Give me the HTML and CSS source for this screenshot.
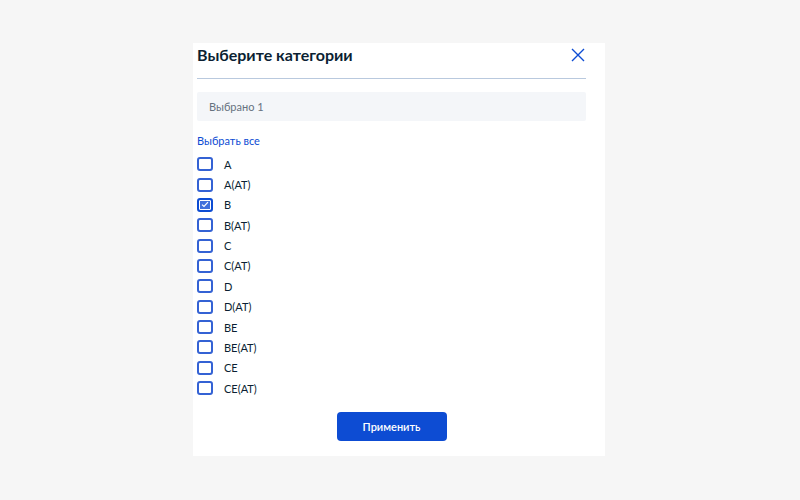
FILE: index.html
```html
<!DOCTYPE html>
<html lang="ru">
<head>
<meta charset="utf-8">
<link rel="stylesheet" href="styles.css">
</head>
<body>
<div class="card">
  <div class="header">
    <h1 class="title">Выберите категории</h1>
    <button class="close" aria-label="Закрыть">
      <svg width="14" height="14" viewBox="0 0 14 14"><path d="M1 1L13 13M13 1L1 13" stroke="#0d4cd3" stroke-width="1.4" fill="none"/></svg>
    </button>
  </div>
  <div class="field">Выбрано 1</div>
  <a class="select-all" href="#">Выбрать все</a>
  <ul class="list">
    <li class="row"><span class="box"></span><span class="label">A</span></li>
    <li class="row"><span class="box"></span><span class="label">A(AT)</span></li>
    <li class="row"><span class="box checked"><svg width="8" height="7" viewBox="0 0 8 7"><path d="M1 3.6L3 5.5L7 1.2" stroke="#fff" stroke-width="1.2" fill="none"/></svg></span><span class="label">B</span></li>
    <li class="row"><span class="box"></span><span class="label">B(AT)</span></li>
    <li class="row"><span class="box"></span><span class="label">C</span></li>
    <li class="row"><span class="box"></span><span class="label">C(AT)</span></li>
    <li class="row"><span class="box"></span><span class="label">D</span></li>
    <li class="row"><span class="box"></span><span class="label">D(AT)</span></li>
    <li class="row"><span class="box"></span><span class="label">BE</span></li>
    <li class="row"><span class="box"></span><span class="label">BE(AT)</span></li>
    <li class="row"><span class="box"></span><span class="label">CE</span></li>
    <li class="row"><span class="box"></span><span class="label">CE(AT)</span></li>
  </ul>
  <div class="actions">
    <button class="apply">Применить</button>
  </div>
</div>
</body>
</html>
```
FILE: styles.css
```css
html, body {
  margin: 0;
  padding: 0;
  background: #f6f6f6;
  font-family: Lato, "Liberation Sans", sans-serif;
  color: #0b1f33;
}
.card {
  box-sizing: border-box;
  margin: 43px 0 0 193px;
  width: 412px;
  height: 413px;
  padding: 0 19px 0 4px;
  background: #fff;
}
.header {
  display: flex;
  align-items: center;
  justify-content: space-between;
  height: 24px;
  padding-bottom: 11px;
  border-bottom: 1px solid #b9c9de;
}
.title {
  margin: 0;
  font-size: 16px;
  font-weight: 700;
  line-height: 24px;
  color: #0b1f33;
}
.close {
  border: 0;
  background: none;
  padding: 0;
  margin-right: 1px;
  width: 14px;
  height: 14px;
  display: flex;
}
.field {
  margin-top: 13px;
  height: 29px;
  line-height: 29px;
  padding-left: 12px;
  background: #f4f6f9;
  border-radius: 2px;
  font-size: 11px;
  color: #66727f;
}
.select-all {
  display: block;
  margin-top: 13px;
  line-height: 14px;
  font-size: 11px;
  color: #0d4cd3;
  text-decoration: none;
}
.list {
  list-style: none;
  margin: 6px 0 0;
  padding: 0;
}
.row {
  display: flex;
  align-items: center;
  height: 20.36px;
}
.box {
  box-sizing: border-box;
  width: 16px;
  height: 14px;
  border: 2px solid #3462d4;
  border-radius: 3px;
  background: #fff;
  display: flex;
  align-items: center;
  justify-content: center;
}
.box.checked {
  border: 2px solid #0d4cd3;
  background: #3f6fdc;
  box-shadow: inset 0 0 0 1px #fff;
}
.label {
  margin-left: 11px;
  font-size: 11px;
  color: #0b1f33;
}
.actions {
  display: flex;
  justify-content: center;
  margin-top: 14px;
}
.apply {
  width: 110px;
  height: 29px;
  border: 0;
  border-radius: 4px;
  background: #0d4cd3;
  color: #fff;
  font-family: Lato, "Liberation Sans", sans-serif;
  font-size: 11px;
  font-weight: 600;
}
```
